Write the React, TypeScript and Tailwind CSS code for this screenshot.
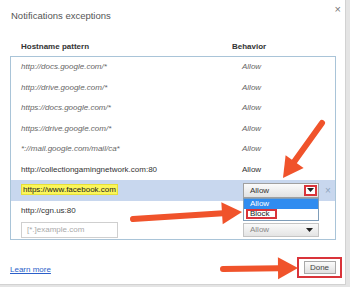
import React from "react";

const rows = [
	"http://docs.google.com/*",
	"http://drive.google.com/*",
	"https://docs.google.com/*",
	"https://drive.google.com/*",
	"*://mail.google.com/mail/ca*",
];

function Caret({ className = "" }: { className?: string }) {
	return (
		<svg width="7" height="4" viewBox="0 0 7 4" className={className}>
			<path d="M0 0 L7 0 L3.5 4 Z" fill="#222" />
		</svg>
	);
}

function Arrow({ shaft, head }: { shaft: string; head: string }) {
	return (
		<g>
			<path d={shaft} stroke="#f0532b" strokeWidth="6" strokeLinecap="round" fill="none" />
			<polygon points={head} fill="#f0532b" />
		</g>
	);
}

export default function App() {
	return (
		<div
			className="w-[350px] h-[287px] bg-[#e4e4e4] overflow-hidden"
			style={{ fontFamily: '"Liberation Sans", Arial, sans-serif' }}
		>
			<div className="relative flex flex-col w-[346px] h-[285px] bg-white border-r border-b border-[#d2d2d2]">
				<div className="flex items-start justify-between">
					<div className="mt-[9px] ml-[11px] text-[9.5px] leading-[13px] text-[#555]">
						Notifications exceptions
					</div>
					<div className="mt-[3px] mr-[4px] text-[11px] leading-[13px] text-[#777]">×</div>
				</div>

				<div className="flex mt-[20px] h-[10px] text-[8px] leading-[10px] font-bold text-[#333]">
					<div className="w-[232px] pl-[21px]">Hostname pattern</div>
					<div>Behavior</div>
				</div>

				<div className="flex flex-col mt-[4px] ml-[10px] w-[326px] h-[184px] border border-[#a9c4d8] text-[8px]">
					{rows.map((r) => (
						<div key={r} className="flex items-center h-[20.6px] italic text-[#666]">
							<div className="w-[231px] pl-[10px]">{r}</div>
							<div>Allow</div>
						</div>
					))}
					<div className="flex items-center h-[20.6px] text-[#333]">
						<div className="w-[231px] pl-[10px]">http://collectiongamingnetwork.com:80</div>
						<div>Allow</div>
					</div>

					<div className="relative flex items-center h-[20.6px] bg-[#c8d7ee] text-[#222]">
						<div className="w-[232px] pl-[10px]">
							<span className="inline-block h-[11px] leading-[9px] px-[1px] bg-[#fbf65a] border border-[#e6df3a]">
								https://www.facebook.com
							</span>
						</div>
						<div className="relative">
							<div className="flex items-center w-[76px] h-[15px] border border-[#a0a0a0] bg-gradient-to-b from-[#fbfbfb] to-[#e2e2e2]">
								<span className="flex-1 pl-[6px] leading-[13px] text-[#333]">Allow</span>
								<div className="flex items-center justify-center w-[13px] h-[11px] mr-[1px] border-2 border-[#d9343a] bg-white">
									<Caret />
								</div>
							</div>
							<div className="absolute left-0 top-[15px] z-10 w-[76px] flex flex-col border border-[#7f9db9] bg-white">
								<div className="h-[10px] leading-[10px] pl-[6px] bg-[#2f8cf0] text-white">Allow</div>
								<div className="flex items-center h-[11px] pl-[2px]">
									<span className="block w-[31px] h-[10px] leading-[6px] pl-[2px] border-2 border-[#d9343a] text-[#222]">
										Block
									</span>
								</div>
							</div>
						</div>
						<div className="ml-[6px] text-[10px] text-[#8fa4bd]">×</div>
					</div>

					<div className="flex items-center h-[20.6px] text-[#333]">
						<div className="w-[231px] pl-[10px]">http://cgn.us:80</div>
					</div>

					<div className="flex items-center h-[18px]">
						<div className="w-[232px] pl-[10px]">
							<div className="w-[97px] h-[16px] border border-[#cfcfcf] pl-[5px] leading-[14px] text-[#aaa]">
								[*.]example.com
							</div>
						</div>
						<div className="flex items-center w-[76px] h-[14px] border border-[#c4c4c4] bg-gradient-to-b from-[#fafafa] to-[#e4e4e4]">
							<span className="flex-1 pl-[6px] leading-[12px] text-[#888]">Allow</span>
							<Caret className="mr-[5px]" />
						</div>
					</div>
				</div>

				<div className="flex items-center justify-between mt-[17px] h-[21px] pl-[10px] pr-[3px]">
					<a className="mt-[4px] text-[8px] leading-[10px] text-[#2b5fc9] underline">Learn more</a>
					<div className="flex items-center justify-center w-[45px] h-[21px] border-2 border-[#d9343a]">
						<div className="flex items-center justify-center w-[32px] h-[13px] border border-[#a8a8a8] bg-gradient-to-b from-[#fbfbfb] to-[#e0e0e0] text-[8px] text-[#444]">
							Done
						</div>
					</div>
				</div>

				<svg className="absolute left-0 top-0 z-20 pointer-events-none" width="346" height="285">
					<Arrow shaft="M322 123 L294 162" head="283,178 303.6,168.1 285.6,155.3" />
					<Arrow shaft="M133 219 L223 213.3" head="242,212 222.7,224.3 221.3,202.3" />
					<Arrow shaft="M223 269 L279 268.3" head="298,268 278.1,279.3 277.9,257.3" />
				</svg>
			</div>
		</div>
	);
}
